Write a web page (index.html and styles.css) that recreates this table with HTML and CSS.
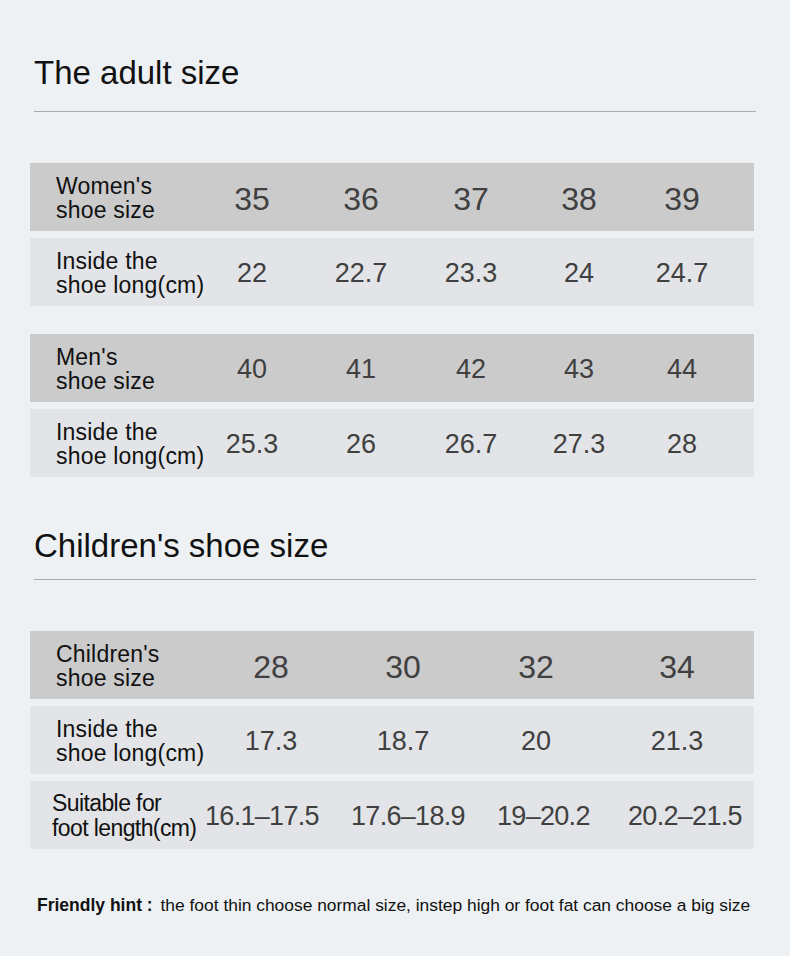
FILE: index.html
```html
<!DOCTYPE html>
<html lang="en">
<head>
<meta charset="utf-8">
<title>Size chart</title>
<link rel="stylesheet" href="styles.css">
</head>
<body>
<main class="page">
  <section class="section section-adult">
    <h2 class="title">The adult size</h2>
    <div class="rule"></div>

    <div class="table table-adult">
      <div class="row row-head">
        <div class="label">Women's<br>shoe size</div>
        <div class="cell big">35</div>
        <div class="cell big">36</div>
        <div class="cell big">37</div>
        <div class="cell big">38</div>
        <div class="cell big">39</div>
      </div>
      <div class="row row-body">
        <div class="label">Inside the<br>shoe long(cm)</div>
        <div class="cell">22</div>
        <div class="cell">22.7</div>
        <div class="cell">23.3</div>
        <div class="cell">24</div>
        <div class="cell">24.7</div>
      </div>
    </div>

    <div class="table table-adult table-men">
      <div class="row row-head">
        <div class="label">Men's<br>shoe size</div>
        <div class="cell">40</div>
        <div class="cell">41</div>
        <div class="cell">42</div>
        <div class="cell">43</div>
        <div class="cell">44</div>
      </div>
      <div class="row row-body">
        <div class="label">Inside the<br>shoe long(cm)</div>
        <div class="cell">25.3</div>
        <div class="cell">26</div>
        <div class="cell">26.7</div>
        <div class="cell">27.3</div>
        <div class="cell">28</div>
      </div>
    </div>
  </section>

  <section class="section section-kids">
    <h2 class="title">Children's shoe size</h2>
    <div class="rule"></div>

    <div class="table table-kids">
      <div class="row row-head">
        <div class="label">Children's<br>shoe size</div>
        <div class="cell big">28</div>
        <div class="cell big">30</div>
        <div class="cell big">32</div>
        <div class="cell big">34</div>
      </div>
      <div class="row row-body">
        <div class="label">Inside the<br>shoe long(cm)</div>
        <div class="cell">17.3</div>
        <div class="cell">18.7</div>
        <div class="cell">20</div>
        <div class="cell">21.3</div>
      </div>
      <div class="row row-body row-range">
        <div class="label label-tight">Suitable for<br>foot length(cm)</div>
        <div class="cell range">16.1–17.5</div>
        <div class="cell range">17.6–18.9</div>
        <div class="cell range">19–20.2</div>
        <div class="cell range">20.2–21.5</div>
      </div>
    </div>
  </section>

  <p class="hint"><strong class="hint-key">Friendly hint :</strong> the foot thin choose normal size, instep high or foot fat can choose a big size</p>
</main>
</body>
</html>
```

FILE: styles.css
```css
html, body {
  margin: 0;
  padding: 0;
  background: #eef1f4;
}

body {
  font-family: "Liberation Sans", Arial, sans-serif;
  color: #111;
  width: 790px;
  min-height: 956px;
}

.page {
  padding-top: 53px;
}

.title {
  margin: 0 0 0 34px;
  font-size: 33px;
  line-height: 40px;
  font-weight: normal;
  color: #111;
}

.rule {
  margin: 18px 0 0 34px;
  width: 722px;
  height: 1px;
  background: #a9abad;
}

.section-kids .rule {
  margin-top: 13px;
}

.table {
  margin: 51px 0 0 30px;
  width: 724px;
  display: flex;
  flex-direction: column;
  gap: 7px;
}

.table-men {
  margin-top: 28px;
}

.section-kids {
  margin-top: 49px;
}

.row {
  height: 68px;
  display: grid;
  align-items: center;
}

.table-adult .row {
  grid-template-columns: 168px 108px 110px 110px 106px 100px;
}

.table-kids .row {
  grid-template-columns: 175px 132px 132px 134px 148px;
}

.table-kids .row-range {
  grid-template-columns: 175px 146px 146px 131px 1fr;
}

.row-head {
  background: #cbcbcc;
}

.row-body {
  background: #e2e4e7;
}

.label {
  padding-left: 26px;
  padding-top: 2px;
  font-size: 23px;
  line-height: 24px;
  letter-spacing: 0.2px;
  color: #111;
  white-space: nowrap;
}

.label-tight {
  padding-left: 22px;
  font-size: 23px;
  line-height: 25px;
  letter-spacing: -0.6px;
}

.cell {
  text-align: center;
  font-size: 27px;
  color: #404040;
  white-space: nowrap;
  padding-top: 2px;
}

.cell.big {
  font-size: 32px;
  padding-top: 4px;
}

.cell.range {
  text-align: left;
  font-size: 27px;
  letter-spacing: -0.7px;
}

.hint {
  margin: 46px 0 0 37px;
  font-size: 17.4px;
  line-height: 20px;
  color: #111;
  white-space: nowrap;
}

.hint-key {
  font-weight: bold;
  font-size: 17.5px;
  letter-spacing: 0;
  margin-right: 3px;
}
```
